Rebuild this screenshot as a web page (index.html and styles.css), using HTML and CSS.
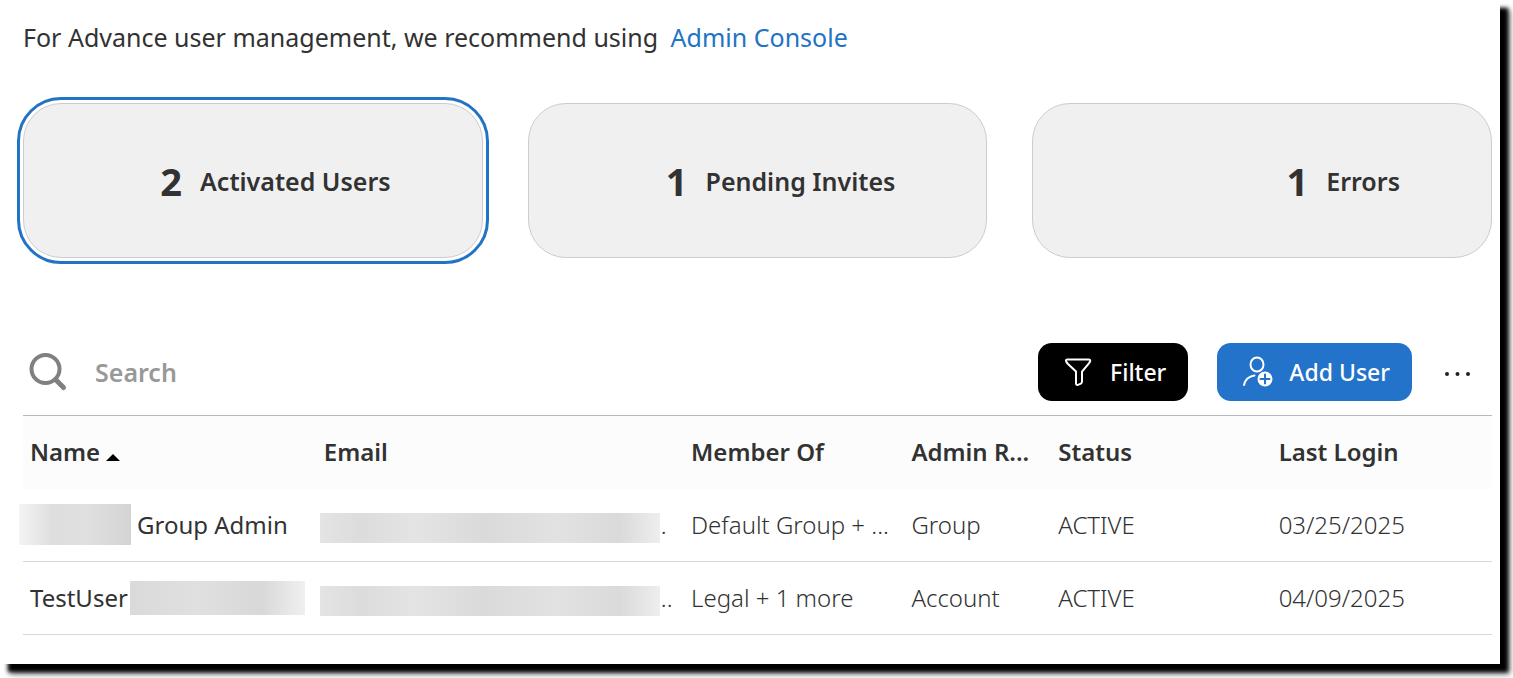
FILE: index.html
```html
<!DOCTYPE html>
<html lang="en">
<head>
<meta charset="utf-8">
<title>User Management</title>
<link rel="stylesheet" href="styles.css">
</head>
<body>
<main class="panel">
  <p class="notice">For Advance user management, we recommend using <a class="notice-link" href="#">Admin Console</a></p>

  <div class="stats">
    <button class="stat stat-selected" type="button"><span class="stat-count">2</span><span>Activated Users</span></button>
    <button class="stat" type="button"><span class="stat-count">1</span><span>Pending Invites</span></button>
    <button class="stat" type="button"><span class="stat-count">1</span><span>Errors</span></button>
  </div>

  <div class="toolbar">
    <label class="search">
      <svg class="search-icon" viewBox="0 0 40 40" aria-hidden="true"><circle cx="17.500" cy="17" r="14"/><path d="M27.500 27.500l8 8" stroke-width="5"/></svg>
      <input class="search-input" type="search" placeholder="Search" aria-label="Search">
    </label>
    <button class="btn btn-filter" type="button">
      <svg class="btn-icon" viewBox="0 0 32 32" aria-hidden="true"><path d="M5.500 3.500h21q2.500 0 1.500 2-.5 1.200-1.500 2.300L20 15.500v10q0 1.500-1.200 2.200l-2.800 1.200q-2 .6-2-1.600V15.500L6 8Q4.800 6.800 4.200 5.500 3.300 3.500 5.500 3.500z"/></svg>
      Filter
    </button>
    <button class="btn btn-add" type="button">
      <svg class="btn-icon" viewBox="0 0 32 32" aria-hidden="true"><ellipse cx="16" cy="8.500" rx="6.500" ry="7"/><path d="M3 29c1-5 4.500-8.500 10.500-9.500"/><circle class="badge-fill" cx="24" cy="23" r="7.500"/><path class="badge-plus" d="M24 18.500v9M19.500 23h9"/></svg>
      Add User
    </button>
    <button class="more" type="button" aria-label="More options">
      <svg class="more-icon" viewBox="0 0 28 8" aria-hidden="true"><circle cx="3" cy="4" r="2"/><circle cx="13.500" cy="4" r="2"/><circle cx="24" cy="4" r="2"/></svg>
    </button>
  </div>

  <table class="users">
    <colgroup><col class="col-20"><col class="col-25"><col class="col-15"><col class="col-10"><col class="col-15"><col class="col-15"></colgroup>
    <thead>
      <tr>
        <th scope="col" aria-sort="ascending">Name <svg class="sort-icon" viewBox="0 0 14 7" aria-hidden="true"><path d="M0 7l7-7 7 7z"/></svg></th>
        <th scope="col">Email</th>
        <th scope="col">Member Of</th>
        <th scope="col">Admin R...</th>
        <th scope="col">Status</th>
        <th scope="col">Last Login</th>
      </tr>
    </thead>
    <tbody>
      <tr>
        <td class="name"><div class="cell"><span class="redact redact-first"></span>Group Admin</div></td>
        <td><div class="cell"><span class="redact redact-email"></span>.</div></td>
        <td>Default Group + ...</td>
        <td>Group</td>
        <td>ACTIVE</td>
        <td>03/25/2025</td>
      </tr>
      <tr>
        <td class="name"><div class="cell">TestUser<span class="redact redact-last"></span></div></td>
        <td><div class="cell"><span class="redact redact-email"></span>..</div></td>
        <td>Legal + 1 more</td>
        <td>Account</td>
        <td>ACTIVE</td>
        <td>04/09/2025</td>
      </tr>
    </tbody>
  </table>
</main>
</body>
</html>
```
FILE: styles.css
```css
* {
  box-sizing: border-box;
}

body {
  margin: 0;
  padding: 0 13px 14px 0;
  min-height: 100vh;
  display: flex;
  overflow: hidden;
  background: #fff;
  color: #323232;
  font-family: "Noto Sans", "Open Sans", sans-serif;
  font-size: 24px;
  line-height: 32px;
}

button,
input {
  font: inherit;
  color: inherit;
}

.panel {
  flex: 1;
  min-width: 0;
  padding: 21px 8px 28px 23px;
  background: #fff;
  box-shadow: 8px 8px 4px #000, 10px 10px 6px rgba(0, 0, 0, 0.5);
}

.notice {
  margin: 0;
  font-size: 25px;
}

.notice-link {
  margin-left: 6px;
  color: #2273c3;
  text-decoration: none;
}

.stats {
  display: grid;
  grid-template-columns: repeat(3, 1fr);
  gap: 45px;
  margin-top: 50px;
}

.stat {
  display: flex;
  align-items: center;
  justify-content: flex-end;
  gap: 18px;
  height: 155px;
  padding: 0 91px 0 24px;
  border: 1px solid #ccc;
  border-radius: 38px;
  background: #f0f0f0;
  font-size: 25px;
  font-weight: 600;
}

.stat-selected {
  outline: 3px solid #2273c3;
  outline-offset: 3px;
}

.stat-count {
  font-size: 38px;
  font-weight: 700;
}

.toolbar {
  display: flex;
  align-items: center;
  height: 86px;
  margin-top: 71px;
}

.search {
  flex: 1;
  display: flex;
  align-items: center;
  gap: 27px;
  padding-left: 5px;
}

.search-icon {
  width: 40px;
  height: 40px;
  fill: none;
  stroke: #808080;
  stroke-width: 4;
  stroke-linecap: round;
}

.search-input {
  flex: 1;
  min-width: 0;
  padding: 0;
  border: 0;
  background: none;
  font-size: 25px;
  font-weight: 600;
}

.search-input::placeholder {
  color: #999;
  opacity: 1;
}

.btn {
  display: flex;
  align-items: center;
  gap: 16px;
  height: 58px;
  padding: 0 22px 0 24px;
  border: 0;
  border-radius: 14px;
  color: #fff;
  font-size: 23px;
  font-weight: 500;
}

.btn-filter {
  background: #000;
}

.btn-add {
  margin-left: 29px;
  background: #2273c9;
}

.btn-icon {
  width: 32px;
  height: 32px;
  fill: none;
  stroke: #fff;
  stroke-width: 2;
  stroke-linecap: round;
}

.badge-fill {
  fill: #fff;
  stroke: none;
}

.badge-plus {
  stroke: #2273c9;
}

.more {
  margin: 4px 20px 0 32px;
  padding: 0;
  border: 0;
  background: none;
}

.more-icon {
  display: block;
  width: 28px;
  height: 8px;
  fill: #222;
}

.users {
  width: 100%;
  table-layout: fixed;
  border-collapse: collapse;
  border-top: 1px solid #b8b8b8;
}

.col-10 {
  width: 10%;
}

.col-15 {
  width: 15%;
}

.col-20 {
  width: 20%;
}

.col-25 {
  width: 25%;
}

.users th,
.users td {
  height: 73px;
  padding: 0 7px;
  text-align: left;
  white-space: nowrap;
}

.users th {
  background: #fcfcfc;
  font-weight: 600;
}

.users td {
  border-bottom: 1px solid #d8d8d8;
  font-weight: 300;
}

.users .name {
  font-weight: 400;
}

.sort-icon {
  width: 14px;
  height: 7px;
  fill: #000;
}

.cell {
  display: flex;
  align-items: center;
}

.redact {
  flex: none;
}

.redact-first {
  width: 112px;
  height: 41px;
  margin: 0 6px 0 -11px;
  background: linear-gradient(90deg, #f4f4f4, #dedede 30%, #e0e0e0 60%, #d4d4d4);
}

.redact-last {
  width: 175px;
  height: 34px;
  margin-left: 2px;
  background: linear-gradient(90deg, #dadada, #e0e0e0 40%, #d8d8d8 75%, #f0f0f0);
}

.redact-email {
  width: 340px;
  height: 30px;
  margin: 6px 1px 0 -4px;
  background: linear-gradient(90deg, #e4e4e4, #dcdcdc 12%, #e4e4e4 28%, #dadada 48%, #e2e2e2 70%, #dadada 88%, #eee);
}
```
